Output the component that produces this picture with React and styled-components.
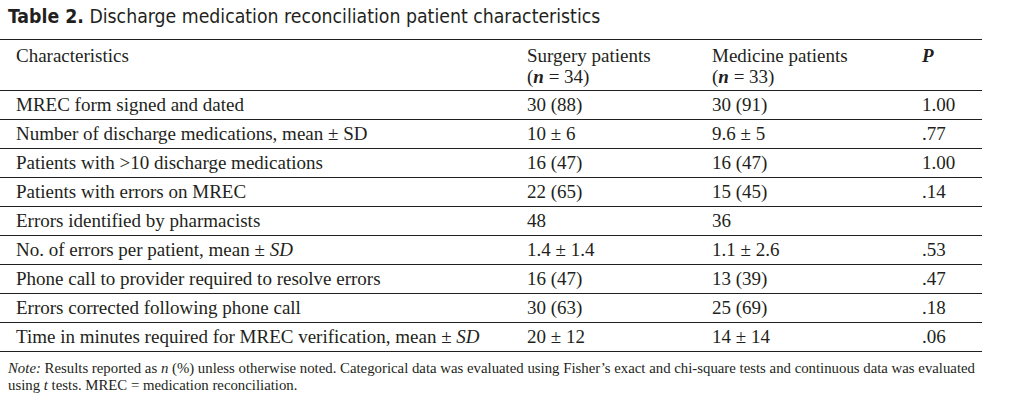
import styled, { createGlobalStyle } from 'styled-components'

const GlobalStyle = createGlobalStyle`
    html, body {
        margin: 0;
        padding: 0;
        background: #ffffff;
    }
`

const Page = styled.div`
    width: 1010px;
    height: 401px;
    background: #ffffff;
    color: #231f20;
    overflow: hidden;
    padding-top: 5px;
    box-sizing: border-box;
`

const Caption = styled.div`
    font-family: "DejaVu Sans Condensed", "Liberation Sans", sans-serif;
    font-stretch: condensed;
    font-size: 19.3px;
    line-height: 24px;
    padding-left: 8px;
    margin-bottom: 10px;

    b {
        font-weight: 700;
    }
`

const Table = styled.table`
    width: 982px;
    border-collapse: collapse;
    font-family: "Liberation Serif", serif;
    font-size: 19px;
    color: #231f20;
    border-top: 1.5px solid #231f20;
    border-bottom: 1.5px solid #231f20;
`

const Col = styled.col`
    width: ${props => props.$w}px;
`

const HeadCell = styled.th`
    text-align: left;
    font-weight: 400;
    vertical-align: top;
    padding: 5px 0 0 16px;
    height: 45px;
    line-height: 21px;
    border-bottom: 1.5px solid #231f20;
    white-space: nowrap;
`

const Cell = styled.td`
    text-align: left;
    padding: 0 0 0 16px;
    height: 28px;
    line-height: 28px;
    border-bottom: ${props => props.$last ? 'none' : '1.5px solid #231f20'};
    white-space: nowrap;
`

const Note = styled.div`
    font-family: "Liberation Serif", serif;
    font-size: 14.8px;
    line-height: 17px;
    padding: 8px 30px 0 8px;
`

const rows = [
    ['MREC form signed and dated', '30 (88)', '30 (91)', '1.00'],
    ['Number of discharge medications, mean ± SD', '10 ± 6', '9.6 ± 5', '.77'],
    ['Patients with >10 discharge medications', '16 (47)', '16 (47)', '1.00'],
    ['Patients with errors on MREC', '22 (65)', '15 (45)', '.14'],
    ['Errors identified by pharmacists', '48', '36', ''],
    [<>No. of errors per patient, mean ± <i>SD</i></>, '1.4 ± 1.4', '1.1 ± 2.6', '.53'],
    ['Phone call to provider required to resolve errors', '16 (47)', '13 (39)', '.47'],
    ['Errors corrected following phone call', '30 (63)', '25 (69)', '.18'],
    [<>Time in minutes required for MREC verification, mean ± <i>SD</i></>, '20 ± 12', '14 ± 14', '.06'],
]

function App() {
    return (
        <Page>
            <GlobalStyle />
            <Caption>
                <b>Table 2.</b> Discharge medication reconciliation patient characteristics
            </Caption>
            <Table>
                <colgroup>
                    <Col $w={511} />
                    <Col $w={185} />
                    <Col $w={210} />
                    <Col $w={76} />
                </colgroup>
                <thead>
                    <tr>
                        <HeadCell>Characteristics</HeadCell>
                        <HeadCell>Surgery patients<br />(<b><i>n</i></b> = 34)</HeadCell>
                        <HeadCell>Medicine patients<br />(<b><i>n</i></b> = 33)</HeadCell>
                        <HeadCell><b><i>P</i></b></HeadCell>
                    </tr>
                </thead>
                <tbody>
                    {rows.map((r, i) => (
                        <tr key={i}>
                            {r.map((c, j) => (
                                <Cell key={j} $last={i === rows.length - 1}>{c}</Cell>
                            ))}
                        </tr>
                    ))}
                </tbody>
            </Table>
            <Note>
                <i>Note:</i> Results reported as <i>n</i> (%) unless otherwise noted. Categorical data was evaluated using Fisher’s exact and chi-square tests and continuous data was evaluated using <i>t</i> tests. MREC = medication reconciliation.
            </Note>
        </Page>
    )
}

export default App
